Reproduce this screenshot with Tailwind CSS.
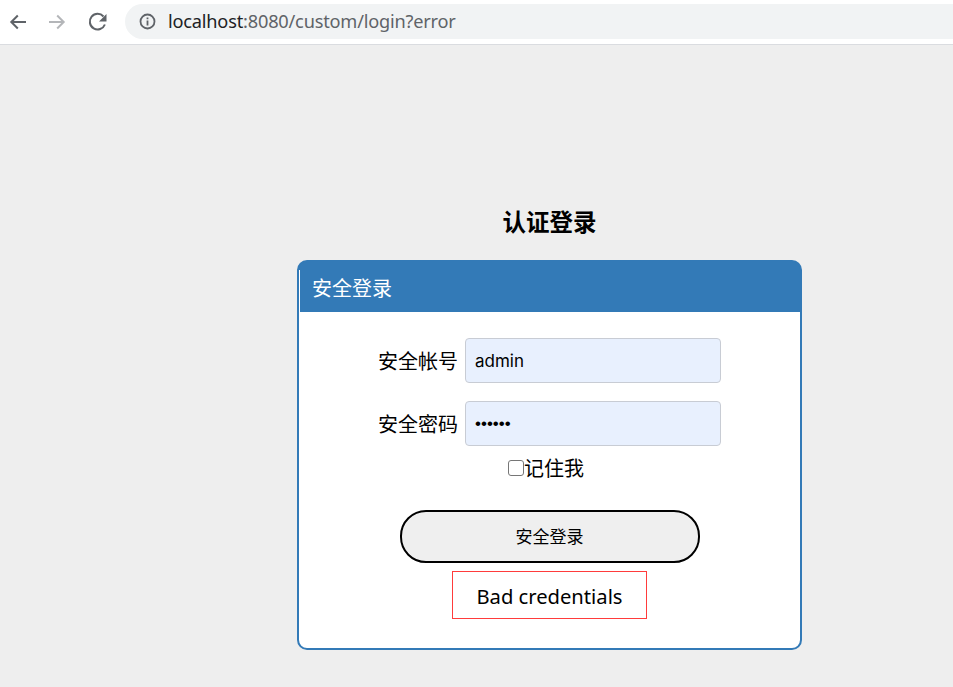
<!doctype html>
<html lang="zh">
<head>
<meta charset="utf-8">
<script src="https://cdn.jsdelivr.net/npm/@tailwindcss/browser@4"></script>
</head>
<body class="w-[953px] h-[687px] overflow-hidden bg-[#eeeeee] font-['Noto_Sans','Noto_Sans_CJK_SC',sans-serif] text-black">
<header class="h-[45px] bg-white border-b border-[#dadce0] flex items-center">
  <div class="w-[125px] flex items-center pl-[8px] shrink-0">
    <svg class="w-[20px] h-[20px]" viewBox="0 0 20 20" fill="none" stroke="#5f6368" stroke-width="2"><path d="M18 10H3.500M9.800 3.500L3.300 10l6.500 6.500"/></svg>
    <svg class="w-[20px] h-[20px] ml-[19px]" viewBox="0 0 20 20" fill="none" stroke="#b4b6b9" stroke-width="2"><path d="M2 10h14.500M10.200 3.500L16.700 10l-6.500 6.500"/></svg>
    <svg class="w-[20px] h-[20px] ml-[21px]" viewBox="0 0 20 20" fill="none" stroke="#5f6368" stroke-width="2"><path d="M16.900 12.500A7.800 7.800 0 1 1 15.500 4.500"/><path d="M18.500 2v7.500H11z" fill="#5f6368" stroke="none"/></svg>
  </div>
  <div class="flex-1 h-[35px] -mt-[2px] bg-[#f1f3f4] rounded-l-full flex items-center pl-[14px]">
    <svg class="w-[17px] h-[17px] shrink-0" viewBox="0 0 17 17" fill="none" stroke="#5f6368"><circle cx="8.500" cy="8.500" r="7" stroke-width="1.800"/><path d="M8.500 7.500v5M8.500 4.500v1.800" stroke-width="1.800"/></svg>
    <span class="ml-[12px] text-[18.200px] leading-none tracking-[-0.2px] text-[#202124] font-['Noto_Sans',sans-serif]">localhost<span class="text-[#5f6368]">:8080/custom/login?error</span></span>
  </div>
</header>
<main class="ml-[297px] w-[505px]">
  <h1 class="mt-[159px] h-[36px] text-center text-[23.500px] leading-[36px] font-bold">认证登录</h1>
  <section class="mt-[20px] h-[390px] bg-[linear-gradient(#337ab7_8px,white_8px)] border-2 border-[#337ab7] rounded-[10px] overflow-hidden flex flex-col">
    <div class="h-[50px] ml-[1px] bg-[#337ab7] text-white text-[20px] leading-[54px] pl-[12px]">安全登录</div>
    <form class="flex flex-col items-center">
      <div class="mt-[26px] flex items-center h-[45px] self-start ml-[79px] gap-[7px]">
        <label class="text-[20px] leading-none w-[80px] mt-[3px]">安全帐号</label>
        <input type="text" value="admin" class="w-[256px] h-[45px] bg-[#e8f0fe] border border-[#c8ccd4] rounded-[4px] pl-[9px] text-[17px] font-['Inter',sans-serif] outline-none">
      </div>
      <div class="mt-[18px] flex items-center h-[45px] self-start ml-[79px] gap-[7px]">
        <label class="text-[20px] leading-none w-[80px] mt-[2px]">安全密码</label>
        <input type="password" value="123456" class="w-[256px] h-[45px] bg-[#e8f0fe] border border-[#c8ccd4] rounded-[4px] pl-[9px] text-[17px] font-['Liberation_Sans',sans-serif] outline-none">
      </div>
      <div class="mt-[10px] h-[24px] flex items-center text-[20px] leading-none -translate-x-[3px]">
        <input type="checkbox" class="w-[16px] h-[16px] m-0 -ml-[1px] appearance-none border border-[#767676] rounded-[3px] bg-white">
        <span class="mt-[1px]">记住我</span>
      </div>
      <button type="button" class="mt-[30px] w-[300px] h-[53px] bg-[#efefef] border-2 border-black rounded-[26px] text-[17px] leading-none">安全登录</button>
      <div class="mt-[8px] w-[195px] h-[48px] border border-[#ff3b3b] flex items-center justify-center text-[20.200px] leading-none pt-[2px]">Bad credentials</div>
    </form>
  </section>
</main>
</body>
</html>
